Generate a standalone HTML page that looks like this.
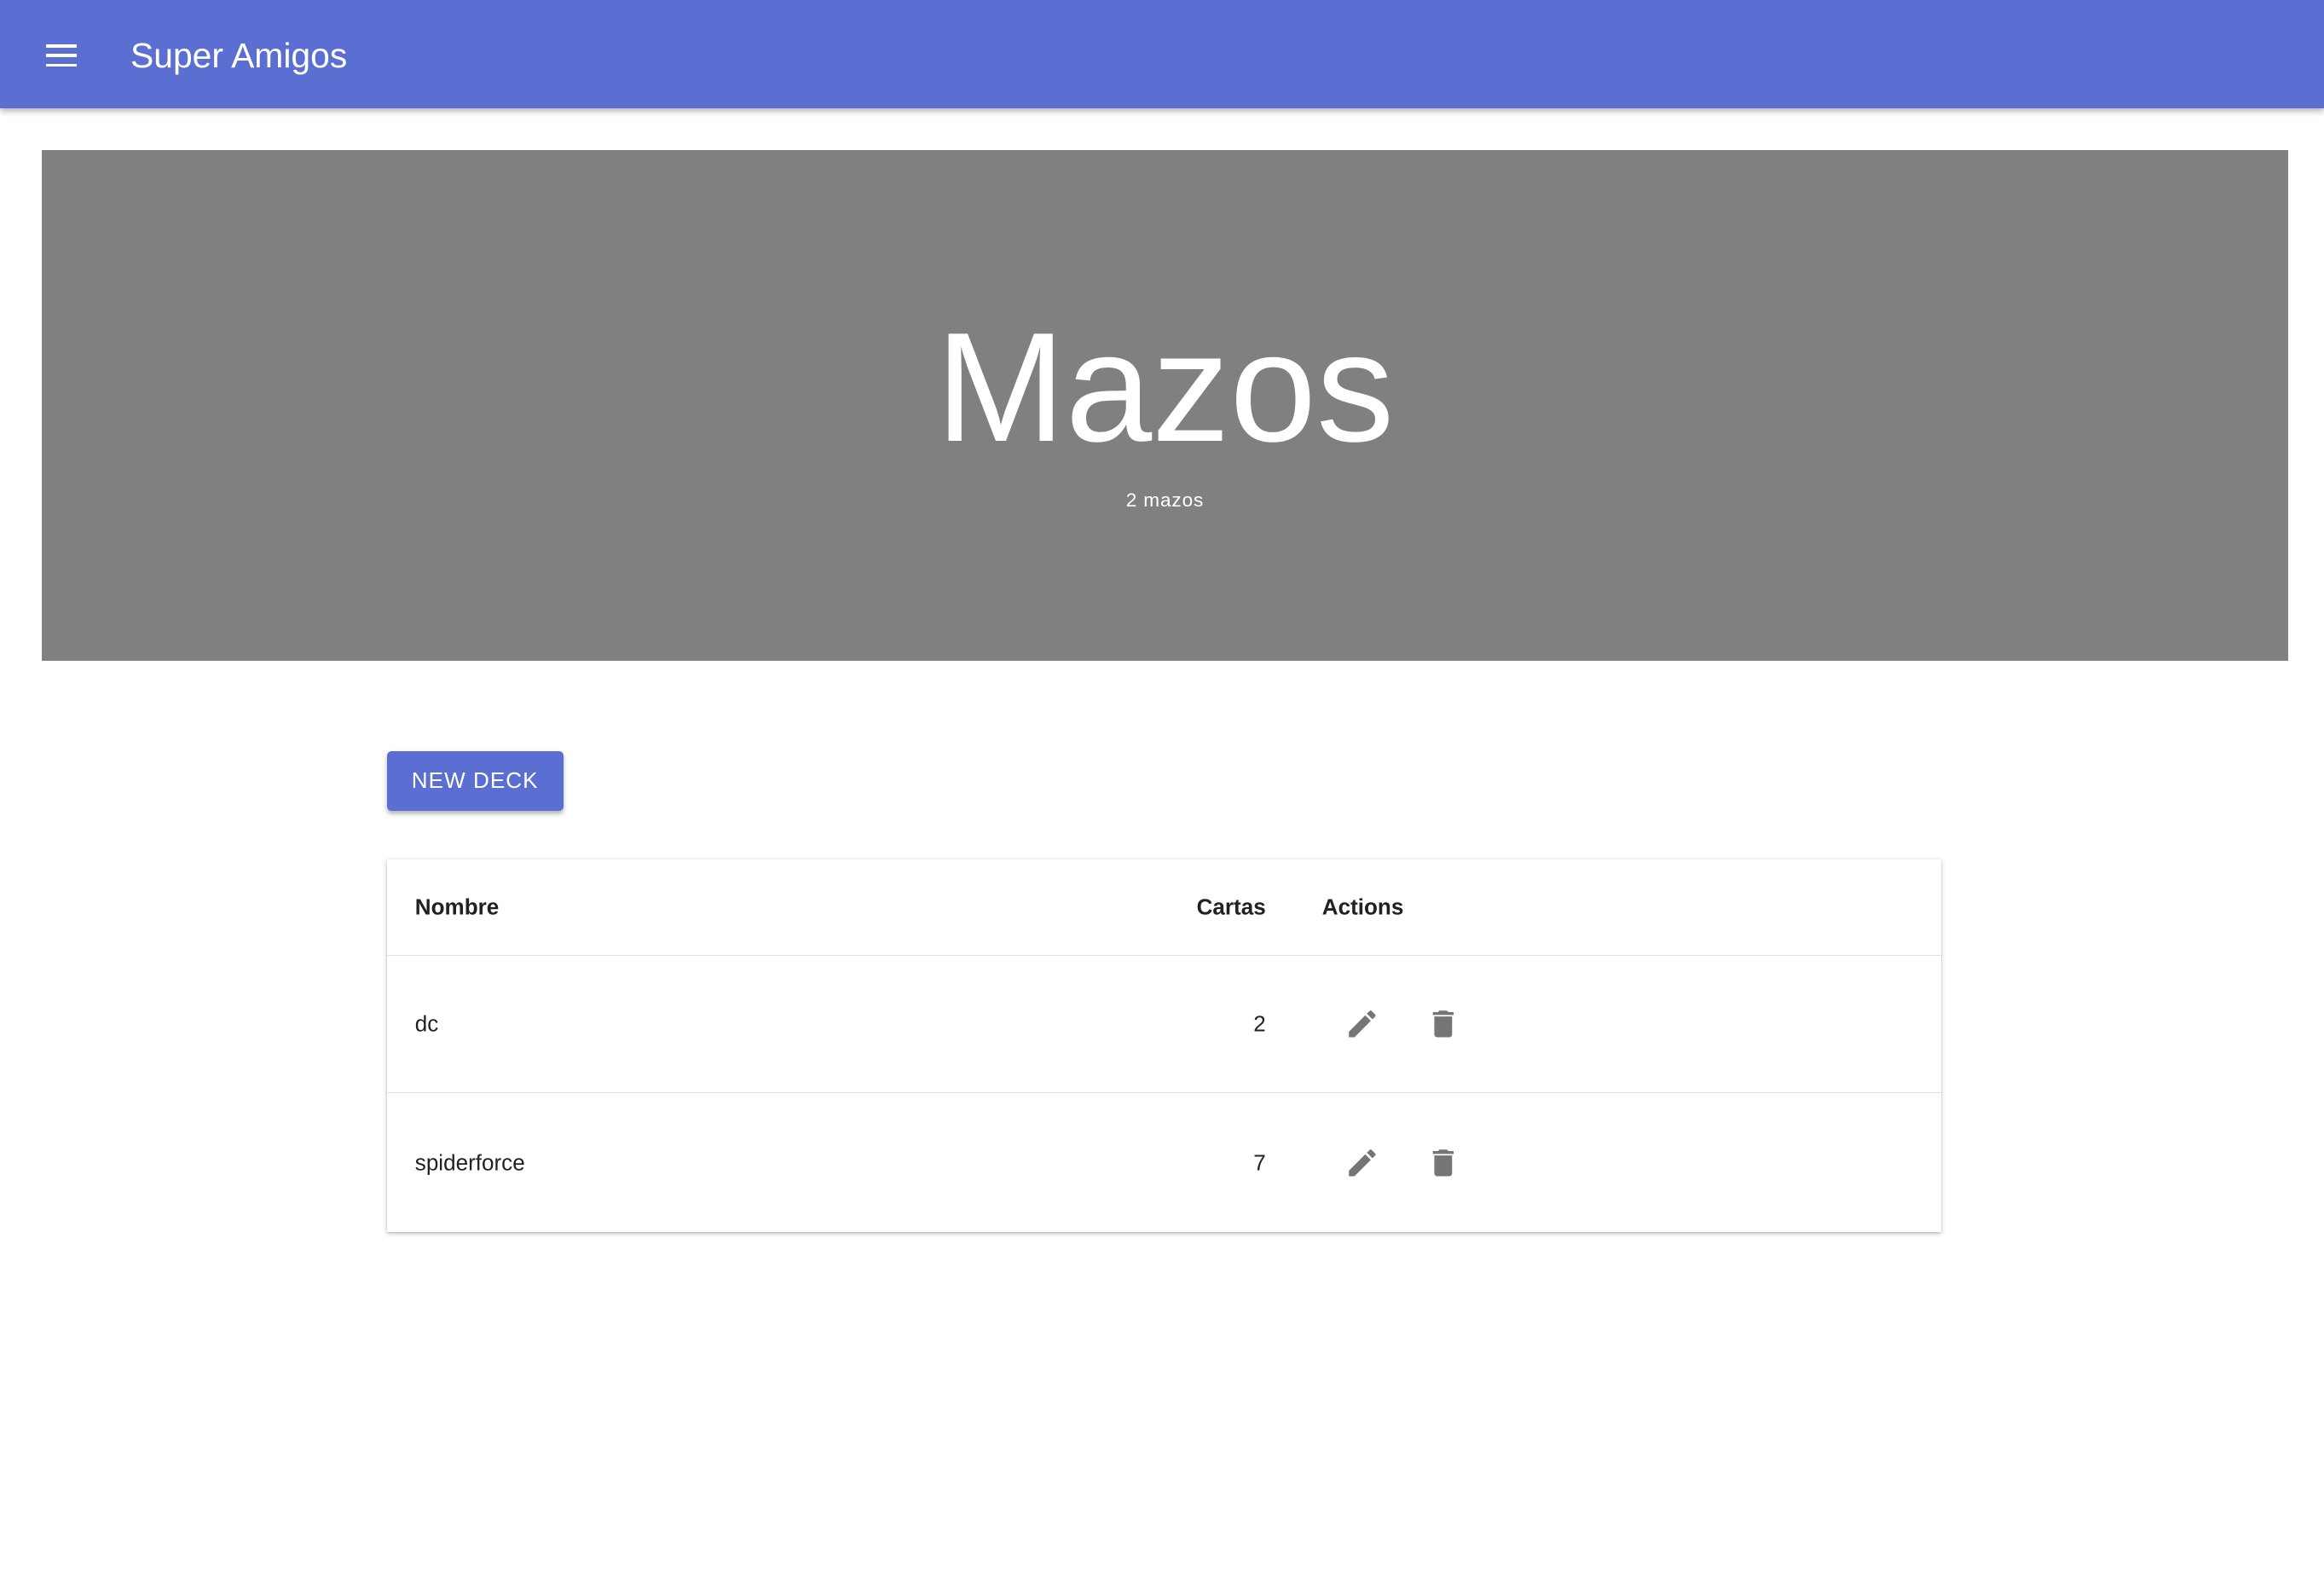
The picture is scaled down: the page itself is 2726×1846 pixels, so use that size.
<!DOCTYPE html>
<html><head><meta charset="utf-8"><style>
html,body{margin:0;padding:0;background:#fff;width:2726px;height:1846px;overflow:hidden}
#w{zoom:1.73852;width:1568px;height:1062px;position:relative;font-family:"Liberation Sans",sans-serif;color:#212121}
.bar{position:absolute;left:0;top:0;width:1568px;height:73px;background:#5a6fd1;box-shadow:0 2px 4px rgba(0,0,0,.3)}
.bar .t{position:absolute;left:88px;top:24px;color:#fff;font-size:23.5px}
.ham{position:absolute;left:31px;top:30px;width:21px}
.ham i{display:block;height:2px;background:#fff;margin-bottom:4.5px}
.ban{position:absolute;left:28px;top:101px;width:1516px;height:345px;background:#808080;color:#fff;text-align:center}
.ban h1{margin:0;position:absolute;left:0;right:0;top:160px;font-weight:300;font-size:105px;line-height:0;letter-spacing:0}
.ban p{margin:0;position:absolute;left:0;right:0;top:229px;font-size:13px;letter-spacing:.5px}
.btn{position:absolute;left:261px;top:507px;width:119px;height:40px;background:#5a6fd1;color:#fff;border-radius:3px;font-size:15px;line-height:40px;text-align:center;letter-spacing:.6px;box-shadow:0 2px 3px rgba(0,0,0,.3)}
.card{position:absolute;left:261px;top:580px;width:1049px;height:251px;background:#fff;box-shadow:0 1px 3px rgba(0,0,0,.25),0 1px 1px rgba(0,0,0,.1)}
.row{position:absolute;left:0;width:1049px;font-size:15px}
.h{top:0;height:64px;border-bottom:1px solid #e0e0e0;font-weight:bold}
.r1{top:65px;height:92px;border-bottom:1px solid #e0e0e0}
.r2{top:158px;height:93px}
.row span{position:absolute;top:50%;transform:translateY(-50%)}
.n{left:19px}.c{right:456px}.a{left:631px}
.row svg{position:absolute;top:50%;margin-top:-12px}
</style></head><body><div id="w">
<div class="bar"><div class="ham"><i></i><i></i><i></i></div><div class="t">Super Amigos</div></div>
<div class="ban"><h1>Mazos</h1><p>2 mazos</p></div>
<div class="btn">NEW DECK</div>
<div class="card">
<div class="row h"><span class="n">Nombre</span><span class="c">Cartas</span><span class="a">Actions</span></div>
<div class="row r1"><span class="n">dc</span><span class="c">2</span>
<svg style="left:646px" width="24" height="24" viewBox="0 0 24 24"><path fill="#757575" d="M3 17.25V21h3.75L17.81 9.94l-3.75-3.75L3 17.25zM20.71 7.04a1 1 0 000-1.41l-2.34-2.34a1 1 0 00-1.41 0l-1.830 1.83 3.75 3.75 1.83-1.83z"/></svg>
<svg style="left:701px" width="24" height="24" viewBox="0 0 24 24"><path fill="#757575" d="M6 19c0 1.1.9 2 2 2h8c1.1 0 2-.9 2-2V7H6v12zM19 4h-3.5l-1-1h-5l-1 1H5v2h14V4z"/></svg></div>
<div class="row r2"><span class="n">spiderforce</span><span class="c">7</span>
<svg style="left:646px" width="24" height="24" viewBox="0 0 24 24"><path fill="#757575" d="M3 17.25V21h3.75L17.81 9.94l-3.75-3.75L3 17.25zM20.71 7.04a1 1 0 000-1.41l-2.34-2.34a1 1 0 00-1.41 0l-1.83 1.83 3.75 3.75 1.83-1.83z"/></svg>
<svg style="left:701px" width="24" height="24" viewBox="0 0 24 24"><path fill="#757575" d="M6 19c0 1.1.9 2 2 2h8c1.1 0 2-.9 2-2V7H6v12zM19 4h-3.5l-1-1h-5l-1 1H5v2h14V4z"/></svg></div>
</div>
</div></body></html>
